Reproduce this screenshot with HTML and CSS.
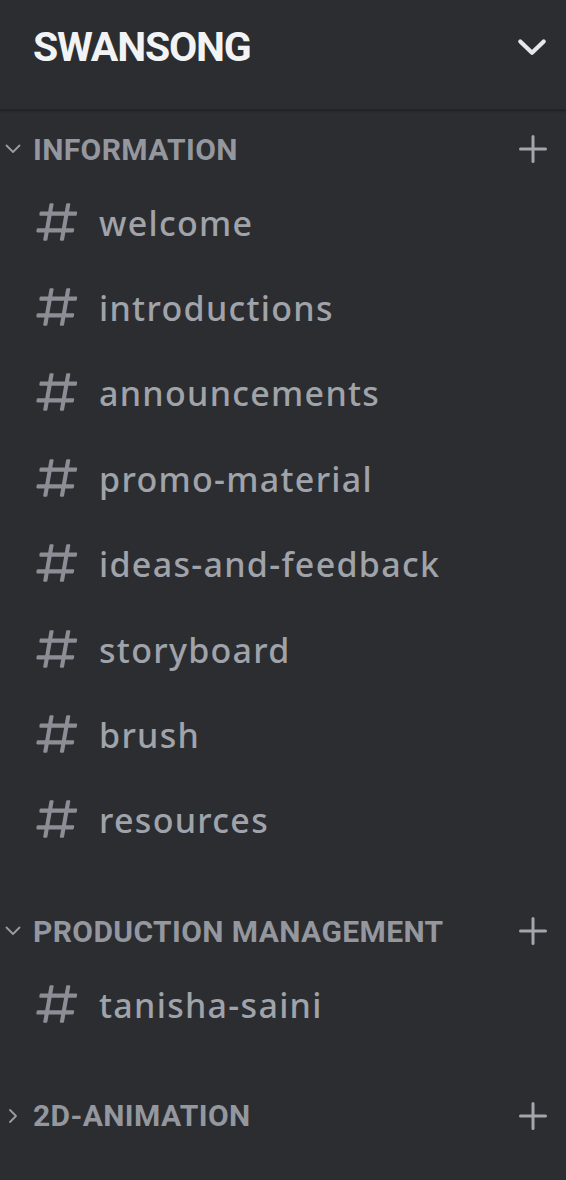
FILE: index.html
```html
<!DOCTYPE html>
<html lang="en">
<head>
<meta charset="utf-8">
<title>SWANSONG</title>
<link rel="stylesheet" href="styles.css">
</head>
<body>
<div class="sidebar">
  <header class="server-header">
    <h1 class="server-name">SWANSONG</h1>
    <svg class="header-chevron" viewBox="0 0 32 20" width="30" height="19"><path d="M3.5 3.5 L16 15.5 L28.5 3.5" fill="none" stroke="currentColor" stroke-width="4.5" stroke-linecap="round" stroke-linejoin="round"/></svg>
  </header>

  <section class="category">
    <div class="category-row">
      <svg class="cat-arrow" viewBox="0 0 16 10" width="16" height="10"><path d="M1.5 1.5 L8 8 L14.5 1.5" fill="none" stroke="currentColor" stroke-width="1.8" stroke-linecap="round" stroke-linejoin="round"/></svg>
      <span class="category-name">INFORMATION</span>
      <svg class="plus" viewBox="0 0 28 28" width="28" height="28"><path d="M14 1.5 V26.5 M1.5 14 H26.5" fill="none" stroke="currentColor" stroke-width="3" stroke-linecap="round"/></svg>
    </div>
    <ul class="channels">
      <li class="channel"><svg class="hash" viewBox="0 0 24 24" width="50" height="50"><path fill="currentColor" d="M5.88657 21C5.57547 21 5.3399 20.7189 5.39427 20.4126L6.00001 17H2.59511C2.28449 17 2.04905 16.7198 2.10259 16.4138L2.27759 15.4138C2.31946 15.1746 2.52722 15 2.77011 15H6.35001L7.41001 9H4.00511C3.69449 9 3.45905 8.71977 3.51259 8.41381L3.68759 7.41381C3.72946 7.17456 3.93722 7 4.18011 7H7.76001L8.39677 3.41262C8.43914 3.17391 8.64664 3 8.88907 3H9.87344C10.1845 3 10.4201 3.28107 10.3657 3.58738L9.76001 7H15.76L16.3968 3.41262C16.4391 3.17391 16.6466 3 16.8891 3H17.8734C18.1845 3 18.4201 3.28107 18.3657 3.58738L17.76 7H21.1649C21.4755 7 21.711 7.28023 21.6574 7.58619L21.4824 8.58619C21.4406 8.82544 21.2328 9 20.9899 9H17.41L16.35 15H19.7549C20.0655 15 20.301 15.2802 20.2474 15.5862L20.0724 16.5862C20.0306 16.8254 19.8228 17 19.5799 17H16L15.3632 20.5874C15.3209 20.8261 15.1134 21 14.8709 21H13.8866C13.5755 21 13.3399 20.7189 13.3943 20.4126L14 17H8.00001L7.36325 20.5874C7.32088 20.8261 7.11337 21 6.87094 21H5.88657ZM9.41045 9L8.35045 15H14.3504L15.4104 9H9.41045Z"/></svg><span class="channel-name">welcome</span></li>
      <li class="channel"><svg class="hash" viewBox="0 0 24 24" width="50" height="50"><path fill="currentColor" d="M5.88657 21C5.57547 21 5.3399 20.7189 5.39427 20.4126L6.00001 17H2.59511C2.28449 17 2.04905 16.7198 2.10259 16.4138L2.27759 15.4138C2.31946 15.1746 2.52722 15 2.77011 15H6.35001L7.41001 9H4.00511C3.69449 9 3.45905 8.71977 3.51259 8.41381L3.68759 7.41381C3.72946 7.17456 3.93722 7 4.18011 7H7.76001L8.39677 3.41262C8.43914 3.17391 8.64664 3 8.88907 3H9.87344C10.1845 3 10.4201 3.28107 10.3657 3.58738L9.76001 7H15.76L16.3968 3.41262C16.4391 3.17391 16.6466 3 16.8891 3H17.8734C18.1845 3 18.4201 3.28107 18.3657 3.58738L17.76 7H21.1649C21.4755 7 21.711 7.28023 21.6574 7.58619L21.4824 8.58619C21.4406 8.82544 21.2328 9 20.9899 9H17.41L16.35 15H19.7549C20.0655 15 20.301 15.2802 20.2474 15.5862L20.0724 16.5862C20.0306 16.8254 19.8228 17 19.5799 17H16L15.3632 20.5874C15.3209 20.8261 15.1134 21 14.8709 21H13.8866C13.5755 21 13.3399 20.7189 13.3943 20.4126L14 17H8.00001L7.36325 20.5874C7.32088 20.8261 7.11337 21 6.87094 21H5.88657ZM9.41045 9L8.35045 15H14.3504L15.4104 9H9.41045Z"/></svg><span class="channel-name">introductions</span></li>
      <li class="channel"><svg class="hash" viewBox="0 0 24 24" width="50" height="50"><path fill="currentColor" d="M5.88657 21C5.57547 21 5.3399 20.7189 5.39427 20.4126L6.00001 17H2.59511C2.28449 17 2.04905 16.7198 2.10259 16.4138L2.27759 15.4138C2.31946 15.1746 2.52722 15 2.77011 15H6.35001L7.41001 9H4.00511C3.69449 9 3.45905 8.71977 3.51259 8.41381L3.68759 7.41381C3.72946 7.17456 3.93722 7 4.18011 7H7.76001L8.39677 3.41262C8.43914 3.17391 8.64664 3 8.88907 3H9.87344C10.1845 3 10.4201 3.28107 10.3657 3.58738L9.76001 7H15.76L16.3968 3.41262C16.4391 3.17391 16.6466 3 16.8891 3H17.8734C18.1845 3 18.4201 3.28107 18.3657 3.58738L17.76 7H21.1649C21.4755 7 21.711 7.28023 21.6574 7.58619L21.4824 8.58619C21.4406 8.82544 21.2328 9 20.9899 9H17.41L16.35 15H19.7549C20.0655 15 20.301 15.2802 20.2474 15.5862L20.0724 16.5862C20.0306 16.8254 19.8228 17 19.5799 17H16L15.3632 20.5874C15.3209 20.8261 15.1134 21 14.8709 21H13.8866C13.5755 21 13.3399 20.7189 13.3943 20.4126L14 17H8.00001L7.36325 20.5874C7.32088 20.8261 7.11337 21 6.87094 21H5.88657ZM9.41045 9L8.35045 15H14.3504L15.4104 9H9.41045Z"/></svg><span class="channel-name">announcements</span></li>
      <li class="channel"><svg class="hash" viewBox="0 0 24 24" width="50" height="50"><path fill="currentColor" d="M5.88657 21C5.57547 21 5.3399 20.7189 5.39427 20.4126L6.00001 17H2.59511C2.28449 17 2.04905 16.7198 2.10259 16.4138L2.27759 15.4138C2.31946 15.1746 2.52722 15 2.77011 15H6.35001L7.41001 9H4.00511C3.69449 9 3.45905 8.71977 3.51259 8.41381L3.68759 7.41381C3.72946 7.17456 3.93722 7 4.18011 7H7.76001L8.39677 3.41262C8.43914 3.17391 8.64664 3 8.88907 3H9.87344C10.1845 3 10.4201 3.28107 10.3657 3.58738L9.76001 7H15.76L16.3968 3.41262C16.4391 3.17391 16.6466 3 16.8891 3H17.8734C18.1845 3 18.4201 3.28107 18.3657 3.58738L17.76 7H21.1649C21.4755 7 21.711 7.28023 21.6574 7.58619L21.4824 8.58619C21.4406 8.82544 21.2328 9 20.9899 9H17.41L16.35 15H19.7549C20.0655 15 20.301 15.2802 20.2474 15.5862L20.0724 16.5862C20.0306 16.8254 19.8228 17 19.5799 17H16L15.3632 20.5874C15.3209 20.8261 15.1134 21 14.8709 21H13.8866C13.5755 21 13.3399 20.7189 13.3943 20.4126L14 17H8.00001L7.36325 20.5874C7.32088 20.8261 7.11337 21 6.87094 21H5.88657ZM9.41045 9L8.35045 15H14.3504L15.4104 9H9.41045Z"/></svg><span class="channel-name">promo-material</span></li>
      <li class="channel"><svg class="hash" viewBox="0 0 24 24" width="50" height="50"><path fill="currentColor" d="M5.88657 21C5.57547 21 5.3399 20.7189 5.39427 20.4126L6.00001 17H2.59511C2.28449 17 2.04905 16.7198 2.10259 16.4138L2.27759 15.4138C2.31946 15.1746 2.52722 15 2.77011 15H6.35001L7.41001 9H4.00511C3.69449 9 3.45905 8.71977 3.51259 8.41381L3.68759 7.41381C3.72946 7.17456 3.93722 7 4.18011 7H7.76001L8.39677 3.41262C8.43914 3.17391 8.64664 3 8.88907 3H9.87344C10.1845 3 10.4201 3.28107 10.3657 3.58738L9.76001 7H15.76L16.3968 3.41262C16.4391 3.17391 16.6466 3 16.8891 3H17.8734C18.1845 3 18.4201 3.28107 18.3657 3.58738L17.76 7H21.1649C21.4755 7 21.711 7.28023 21.6574 7.58619L21.4824 8.58619C21.4406 8.82544 21.2328 9 20.9899 9H17.41L16.35 15H19.7549C20.0655 15 20.301 15.2802 20.2474 15.5862L20.0724 16.5862C20.0306 16.8254 19.8228 17 19.5799 17H16L15.3632 20.5874C15.3209 20.8261 15.1134 21 14.8709 21H13.8866C13.5755 21 13.3399 20.7189 13.3943 20.4126L14 17H8.00001L7.36325 20.5874C7.32088 20.8261 7.11337 21 6.87094 21H5.88657ZM9.41045 9L8.35045 15H14.3504L15.4104 9H9.41045Z"/></svg><span class="channel-name">ideas-and-feedback</span></li>
      <li class="channel"><svg class="hash" viewBox="0 0 24 24" width="50" height="50"><path fill="currentColor" d="M5.88657 21C5.57547 21 5.3399 20.7189 5.39427 20.4126L6.00001 17H2.59511C2.28449 17 2.04905 16.7198 2.10259 16.4138L2.27759 15.4138C2.31946 15.1746 2.52722 15 2.77011 15H6.35001L7.41001 9H4.00511C3.69449 9 3.45905 8.71977 3.51259 8.41381L3.68759 7.41381C3.72946 7.17456 3.93722 7 4.18011 7H7.76001L8.39677 3.41262C8.43914 3.17391 8.64664 3 8.88907 3H9.87344C10.1845 3 10.4201 3.28107 10.3657 3.58738L9.76001 7H15.76L16.3968 3.41262C16.4391 3.17391 16.6466 3 16.8891 3H17.8734C18.1845 3 18.4201 3.28107 18.3657 3.58738L17.76 7H21.1649C21.4755 7 21.711 7.28023 21.6574 7.58619L21.4824 8.58619C21.4406 8.82544 21.2328 9 20.9899 9H17.41L16.35 15H19.7549C20.0655 15 20.301 15.2802 20.2474 15.5862L20.0724 16.5862C20.0306 16.8254 19.8228 17 19.5799 17H16L15.3632 20.5874C15.3209 20.8261 15.1134 21 14.8709 21H13.8866C13.5755 21 13.3399 20.7189 13.3943 20.4126L14 17H8.00001L7.36325 20.5874C7.32088 20.8261 7.11337 21 6.87094 21H5.88657ZM9.41045 9L8.35045 15H14.3504L15.4104 9H9.41045Z"/></svg><span class="channel-name">storyboard</span></li>
      <li class="channel"><svg class="hash" viewBox="0 0 24 24" width="50" height="50"><path fill="currentColor" d="M5.88657 21C5.57547 21 5.3399 20.7189 5.39427 20.4126L6.00001 17H2.59511C2.28449 17 2.04905 16.7198 2.10259 16.4138L2.27759 15.4138C2.31946 15.1746 2.52722 15 2.77011 15H6.35001L7.41001 9H4.00511C3.69449 9 3.45905 8.71977 3.51259 8.41381L3.68759 7.41381C3.72946 7.17456 3.93722 7 4.18011 7H7.76001L8.39677 3.41262C8.43914 3.17391 8.64664 3 8.88907 3H9.87344C10.1845 3 10.4201 3.28107 10.3657 3.58738L9.76001 7H15.76L16.3968 3.41262C16.4391 3.17391 16.6466 3 16.8891 3H17.8734C18.1845 3 18.4201 3.28107 18.3657 3.58738L17.76 7H21.1649C21.4755 7 21.711 7.28023 21.6574 7.58619L21.4824 8.58619C21.4406 8.82544 21.2328 9 20.9899 9H17.41L16.35 15H19.7549C20.0655 15 20.301 15.2802 20.2474 15.5862L20.0724 16.5862C20.0306 16.8254 19.8228 17 19.5799 17H16L15.3632 20.5874C15.3209 20.8261 15.1134 21 14.8709 21H13.8866C13.5755 21 13.3399 20.7189 13.3943 20.4126L14 17H8.00001L7.36325 20.5874C7.32088 20.8261 7.11337 21 6.87094 21H5.88657ZM9.41045 9L8.35045 15H14.3504L15.4104 9H9.41045Z"/></svg><span class="channel-name">brush</span></li>
      <li class="channel"><svg class="hash" viewBox="0 0 24 24" width="50" height="50"><path fill="currentColor" d="M5.88657 21C5.57547 21 5.3399 20.7189 5.39427 20.4126L6.00001 17H2.59511C2.28449 17 2.04905 16.7198 2.10259 16.4138L2.27759 15.4138C2.31946 15.1746 2.52722 15 2.77011 15H6.35001L7.41001 9H4.00511C3.69449 9 3.45905 8.71977 3.51259 8.41381L3.68759 7.41381C3.72946 7.17456 3.93722 7 4.18011 7H7.76001L8.39677 3.41262C8.43914 3.17391 8.64664 3 8.88907 3H9.87344C10.1845 3 10.4201 3.28107 10.3657 3.58738L9.76001 7H15.76L16.3968 3.41262C16.4391 3.17391 16.6466 3 16.8891 3H17.8734C18.1845 3 18.4201 3.28107 18.3657 3.58738L17.76 7H21.1649C21.4755 7 21.711 7.28023 21.6574 7.58619L21.4824 8.58619C21.4406 8.82544 21.2328 9 20.9899 9H17.41L16.35 15H19.7549C20.0655 15 20.301 15.2802 20.2474 15.5862L20.0724 16.5862C20.0306 16.8254 19.8228 17 19.5799 17H16L15.3632 20.5874C15.3209 20.8261 15.1134 21 14.8709 21H13.8866C13.5755 21 13.3399 20.7189 13.3943 20.4126L14 17H8.00001L7.36325 20.5874C7.32088 20.8261 7.11337 21 6.87094 21H5.88657ZM9.41045 9L8.35045 15H14.3504L15.4104 9H9.41045Z"/></svg><span class="channel-name">resources</span></li>
    </ul>
  </section>

  <section class="category">
    <div class="category-row">
      <svg class="cat-arrow" viewBox="0 0 16 10" width="16" height="10"><path d="M1.5 1.5 L8 8 L14.5 1.5" fill="none" stroke="currentColor" stroke-width="1.8" stroke-linecap="round" stroke-linejoin="round"/></svg>
      <span class="category-name">PRODUCTION MANAGEMENT</span>
      <svg class="plus" viewBox="0 0 28 28" width="28" height="28"><path d="M14 1.5 V26.5 M1.5 14 H26.5" fill="none" stroke="currentColor" stroke-width="3" stroke-linecap="round"/></svg>
    </div>
    <ul class="channels">
      <li class="channel"><svg class="hash" viewBox="0 0 24 24" width="50" height="50"><path fill="currentColor" d="M5.88657 21C5.57547 21 5.3399 20.7189 5.39427 20.4126L6.00001 17H2.59511C2.28449 17 2.04905 16.7198 2.10259 16.4138L2.27759 15.4138C2.31946 15.1746 2.52722 15 2.77011 15H6.35001L7.41001 9H4.00511C3.69449 9 3.45905 8.71977 3.51259 8.41381L3.68759 7.41381C3.72946 7.17456 3.93722 7 4.18011 7H7.76001L8.39677 3.41262C8.43914 3.17391 8.64664 3 8.88907 3H9.87344C10.1845 3 10.4201 3.28107 10.3657 3.58738L9.76001 7H15.76L16.3968 3.41262C16.4391 3.17391 16.6466 3 16.8891 3H17.8734C18.1845 3 18.4201 3.28107 18.3657 3.58738L17.76 7H21.1649C21.4755 7 21.711 7.28023 21.6574 7.58619L21.4824 8.58619C21.4406 8.82544 21.2328 9 20.9899 9H17.41L16.35 15H19.7549C20.0655 15 20.301 15.2802 20.2474 15.5862L20.0724 16.5862C20.0306 16.8254 19.8228 17 19.5799 17H16L15.3632 20.5874C15.3209 20.8261 15.1134 21 14.8709 21H13.8866C13.5755 21 13.3399 20.7189 13.3943 20.4126L14 17H8.00001L7.36325 20.5874C7.32088 20.8261 7.11337 21 6.87094 21H5.88657ZM9.41045 9L8.35045 15H14.3504L15.4104 9H9.41045Z"/></svg><span class="channel-name">tanisha-saini</span></li>
    </ul>
  </section>

  <section class="category">
    <div class="category-row">
      <svg class="cat-arrow" viewBox="0 0 16 16" width="16" height="16"><path d="M5 2 L11 8 L5 14" fill="none" stroke="currentColor" stroke-width="1.8" stroke-linecap="round" stroke-linejoin="round"/></svg>
      <span class="category-name">2D-ANIMATION</span>
      <svg class="plus" viewBox="0 0 28 28" width="28" height="28"><path d="M14 1.5 V26.5 M1.5 14 H26.5" fill="none" stroke="currentColor" stroke-width="3" stroke-linecap="round"/></svg>
    </div>
  </section>
</div>
</body>
</html>
```

FILE: styles.css
```css
html, body {
  margin: 0;
  padding: 0;
  background: #2b2d31;
}

.sidebar {
  width: 566px;
  min-height: 1180px;
  background: #2b2d31;
  font-family: "Noto Sans", "Open Sans", sans-serif;
}

.server-header {
  height: 111px;
  box-sizing: border-box;
  display: flex;
  align-items: center;
  justify-content: space-between;
  padding: 0 19px 14px 33px;
  border-bottom: 2px solid #232428;
  box-shadow: 0 1px 2px rgba(0,0,0,0.15);
}

.server-name {
  margin: 0;
  font-family: Roboto, "Noto Sans", sans-serif;
  font-size: 41px;
  font-weight: 700;
  line-height: 1;
  color: #f2f3f5;
  letter-spacing: -1.2px;
}

.header-chevron {
  color: #e6e7ea;
}

.category {
  margin-top: 49px;
}

.server-header + .category {
  margin-top: 18px;
}

.category-row {
  display: flex;
  align-items: center;
  height: 40px;
  padding-right: 19px;
  color: #94979e;
}

.cat-arrow {
  width: 16px;
  margin: 0 12px 0 5px;
  color: #9a9ca2;
}

.category-name {
  flex: 1;
  font-family: Roboto, "Noto Sans", sans-serif;
  font-size: 30px;
  font-weight: 700;
  letter-spacing: 0.4px;
  color: #94979e;
}

.plus {
  color: #a3a6ac;
}

.channels {
  list-style: none;
  margin: 10px 0 0;
  padding: 0;
}

.channel {
  display: flex;
  align-items: center;
  height: 85.4px;
  padding-left: 32px;
  color: #94979e;
}

.hash {
  flex: none;
  color: #8b8e95;
}

.channel-name {
  margin-left: 17px;
  font-size: 34px;
  font-weight: 500;
  letter-spacing: 1.3px;
  color: #a0a3a9;
  position: relative;
  top: 1px;
}
```
